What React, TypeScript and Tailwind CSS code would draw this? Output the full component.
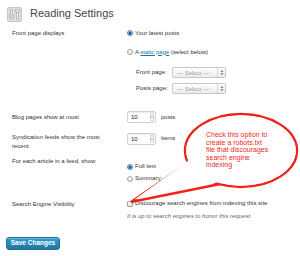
import React from 'react';

const Radio = ({ checked }: { checked?: boolean }) => (
  <span
    className={
      checked
        ? 'w-[6px] h-[6px] rounded-full border border-[#4f84bb] bg-linear-to-b from-[#a9cdf0] to-[#4f90d3] flex items-center justify-center shrink-0'
        : 'w-[6px] h-[6px] rounded-full border border-[#a3a3a3] bg-linear-to-b from-white to-[#e4e4e4] shrink-0'
    }
  >
    {checked && <span className="w-[2px] h-[2px] rounded-full bg-[#14304f]" />}
  </span>
);

const Select = () => (
  <div className="w-[54px] h-[11px] rounded-[2px] border border-[#c9c9c9] bg-linear-to-b from-white to-[#ebebeb] flex items-center">
    <span className="flex-1 pl-[4px] text-[6px] leading-none text-[#a0a0a0]">— Select —</span>
    <span className="w-[8px] h-full border-l border-[#d8d8d8] flex items-center justify-center">
      <svg width="4" height="7" viewBox="0 0 4 7">
        <path d="M0.5 2.8 L2 1 L3.5 2.8 Z M0.5 4.2 L2 6 L3.5 4.2 Z" fill="#666" />
      </svg>
    </span>
  </div>
);

const NumberInput = ({ value }: { value: string }) => (
  <div className="w-[29px] h-[12px] rounded-[2px] border border-[#d2d2d2] bg-white shadow-[inset_0_1px_1px_rgba(0,0,0,0.08)] flex items-center pl-[3px] pr-[1px]">
    <span className="flex-1 text-[6px] leading-none text-[#222]">{value}</span>
    <span className="w-[4px] h-[8px] rounded-[1px] border border-[#cfcfcf] flex items-center justify-center">
      <svg width="3" height="6" viewBox="0 0 3 6">
        <path d="M0.3 2.4 L1.5 1 L2.7 2.4 Z M0.3 3.6 L1.5 5 L2.7 3.6 Z" fill="#555" />
      </svg>
    </span>
  </div>
);

const SettingsIcon = () => (
  <svg width="15" height="15" viewBox="0 0 15 15">
    <rect x="0.5" y="0.5" width="14" height="14" rx="1.5" fill="#dedede" stroke="#c6c6c6" />
    <rect x="3.5" y="3" width="2" height="9" fill="#fafafa" stroke="#9a9a9a" strokeWidth="0.6" />
    <rect x="2.5" y="8" width="4" height="2" fill="#fafafa" stroke="#9a9a9a" strokeWidth="0.6" />
    <rect x="9.5" y="5" width="2" height="7" fill="#fafafa" stroke="#9a9a9a" strokeWidth="0.6" />
    <rect x="8.5" y="3" width="4" height="2" fill="#fafafa" stroke="#9a9a9a" strokeWidth="0.6" />
  </svg>
);

const Label = ({ children }: { children: React.ReactNode }) => (
  <div className="w-[100px] text-[6px] leading-[8px] text-[#333]">{children}</div>
);

export default function App() {
  return (
    <div
      className="relative w-[300px] h-[256px] overflow-hidden bg-white pl-[6px] text-[#333]"
      style={{ fontFamily: '"Liberation Sans", Arial, sans-serif' }}
    >
      <div className="flex items-center gap-[8px] h-[15px] mt-[7px] ml-[1px]">
        <SettingsIcon />
        <h1 className="text-[11px] leading-none text-[#464646] -mt-[2px]">Reading Settings</h1>
      </div>

      <div className="pl-[6px] mt-[7px] grid grid-cols-[115px_1fr]">
        {/* front page */}
        <Label>Front page displays</Label>
        <div className="flex flex-col text-[6px]">
          <div className="h-[8px] flex items-center gap-[2px]">
            <Radio checked />
            <span>Your latest posts</span>
          </div>
          <div className="h-[8px] mt-[11px] flex items-center gap-[2px]">
            <Radio />
            <span>
              A <span className="text-[#21759b] underline">static page</span> (select below)
            </span>
          </div>
          <div className="h-[11px] mt-[11px] pl-[9px] flex items-center">
            <span className="w-[36px]">Front page:</span>
            <Select />
          </div>
          <div className="h-[11px] mt-[5px] pl-[9px] flex items-center">
            <span className="w-[36px]">Posts page:</span>
            <Select />
          </div>
        </div>

        {/* blog pages */}
        <div className="mt-[17px] h-[12px] flex items-center">
          <Label>Blog pages show at most</Label>
        </div>
        <div className="mt-[17px] h-[12px] flex items-center gap-[5px] text-[6px]">
          <NumberInput value="10" />
          <span>posts</span>
        </div>

        {/* syndication */}
        <div className="mt-[10px]">
          <div className="w-[100px] text-[6px] leading-[9px] text-[#333] -mt-[0.5px]">
            Syndication feeds show the most recent
          </div>
        </div>
        <div className="mt-[10px] h-[11px] flex items-center gap-[5px] text-[6px]">
          <NumberInput value="10" />
          <span>items</span>
        </div>

        {/* feed article */}
        <div className="mt-[6px]">
          <Label>For each article in a feed, show</Label>
        </div>
        <div className="mt-[6px] flex flex-col text-[6px]">
          <div className="h-[8px] mt-[6px] flex items-center gap-[2px]">
            <Radio checked />
            <span>Full text</span>
          </div>
          <div className="h-[8px] mt-[4px] flex items-center gap-[2px]">
            <Radio />
            <span>Summary</span>
          </div>
        </div>

        {/* search engine */}
        <div className="mt-[17px]">
          <Label>Search Engine Visibility</Label>
        </div>
        <div className="mt-[17px] flex flex-col text-[6px]">
          <div className="h-[8px] flex items-center gap-[2px]">
            <span className="w-[6px] h-[6px] rounded-[1px] border border-[#a3a3a3] bg-linear-to-b from-white to-[#e4e4e4] shrink-0" />
            <span>Discourage search engines from indexing this site</span>
          </div>
          <div className="h-[8px] mt-[5px] flex items-center italic text-[#666]">
            It is up to search engines to honor this request.
          </div>
        </div>
      </div>

      <button className="mt-[16px] w-[54px] h-[13px] rounded-[3px] border border-[#1f6f94] bg-linear-to-b from-[#2e9fd2] to-[#1f74a0] text-white text-[6.5px] leading-none font-bold flex items-center justify-center shadow-[inset_0_1px_0_rgba(255,255,255,0.3)]">
        Save Changes
      </button>

      {/* callout */}
      <svg className="absolute inset-0 pointer-events-none" width="300" height="256" viewBox="0 0 300 256">
        <polygon points="131,202 195,158 225,183" fill="#fff" stroke="#f0231a" strokeWidth="2.4" strokeLinejoin="miter" />
        <ellipse cx="241" cy="150.5" rx="56" ry="36.5" fill="#fff" stroke="#f0231a" strokeWidth="2.4" />
        <ellipse cx="241" cy="150.5" rx="54.8" ry="35.3" fill="#fff" />
        <polygon points="134.5,199.6 196,155 224,181" fill="#fff" />
      </svg>
      <div className="absolute left-[206px] top-[131px] text-[7px] leading-[7.5px] text-[#f0261e] whitespace-nowrap">
        Check this option to
        <br />
        create a robots.txt
        <br />
        file that discourages
        <br />
        search engine
        <br />
        indexing
      </div>
    </div>
  );
}
